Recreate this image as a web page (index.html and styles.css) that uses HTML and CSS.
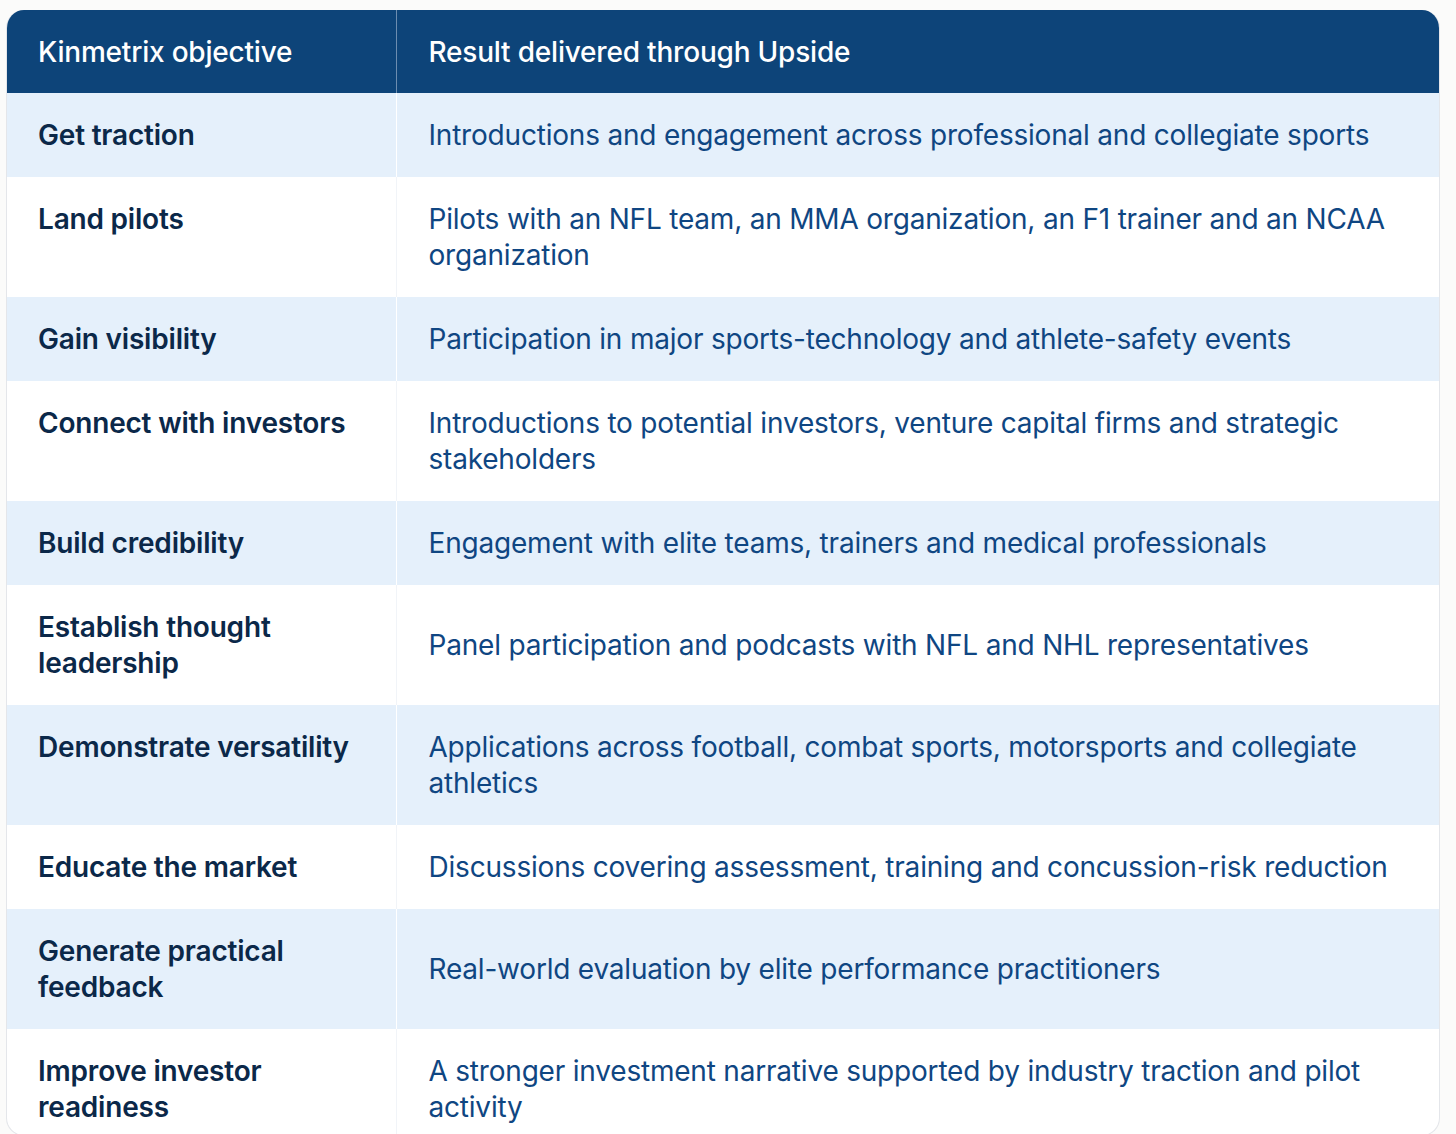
FILE: index.html
```html
<!DOCTYPE html>
<html lang="en">
<head>
<meta charset="utf-8">
<title>Kinmetrix objectives</title>
<link rel="stylesheet" href="styles.css">
</head>
<body>
<div class="card">
  <table class="results">
    <thead>
      <tr>
        <th class="col-obj">Kinmetrix objective</th>
        <th class="col-res">Result delivered through Upside</th>
      </tr>
    </thead>
    <tbody>
      <tr><td class="obj">Get traction</td><td class="res">Introductions and engagement across professional and collegiate sports</td></tr>
      <tr><td class="obj">Land pilots</td><td class="res">Pilots with an NFL team, an MMA organization, an F1 trainer and an NCAA organization</td></tr>
      <tr><td class="obj">Gain visibility</td><td class="res">Participation in major sports-technology and athlete-safety events</td></tr>
      <tr><td class="obj">Connect with investors</td><td class="res">Introductions to potential investors, venture capital firms and strategic stakeholders</td></tr>
      <tr><td class="obj">Build credibility</td><td class="res">Engagement with elite teams, trainers and medical professionals</td></tr>
      <tr><td class="obj">Establish thought leadership</td><td class="res">Panel participation and podcasts with NFL and NHL representatives</td></tr>
      <tr><td class="obj">Demonstrate versatility</td><td class="res">Applications across football, combat sports, motorsports and collegiate athletics</td></tr>
      <tr><td class="obj">Educate the market</td><td class="res">Discussions covering assessment, training and concussion-risk reduction</td></tr>
      <tr><td class="obj">Generate practical feedback</td><td class="res">Real-world evaluation by elite performance practitioners</td></tr>
      <tr class="last"><td class="obj">Improve investor readiness</td><td class="res">A stronger investment narrative supported by industry traction and pilot activity</td></tr>
    </tbody>
  </table>
</div>
</body>
</html>
```

FILE: styles.css
```css
html, body {
  margin: 0;
  padding: 0;
  background: #fbfbfa;
}
body {
  padding: 10px 16px 0 6px;
  font-family: Inter, "Noto Sans", sans-serif;
  height: 1134px;
  box-sizing: border-box;
  overflow: hidden;
}
.card {
  width: 1434px;
  border: 1px solid #e4e6ea;
  border-top: none;
  border-radius: 18px;
  overflow: hidden;
  background: #ffffff;
  box-sizing: border-box;
}
.results {
  width: 100%;
  border-collapse: collapse;
  table-layout: fixed;
}
.col-obj { width: 389px; }
th {
  background: #0d4479;
  color: #ffffff;
  font-weight: 500;
  font-size: 28px;
  letter-spacing: -0.2px;
  text-align: left;
  height: 83px;
  padding: 0 20px 0 31px;
  box-sizing: border-box;
  vertical-align: middle;
}
th.col-res {
  border-left: 1px solid #6c8db0;
  padding-left: 32px;
}
td {
  font-size: 28px;
  line-height: 36px;
  letter-spacing: -0.2px;
  padding: 24px 20px 24px 31px;
}
td.obj {
  color: #0b2849;
  font-weight: 600;
  vertical-align: top;
}
td.res {
  color: #0f4682;
  font-weight: 400;
  vertical-align: middle;
  border-left: 1px solid #f1f4f8;
  padding-left: 32px;
  padding-right: 40px;
}
tbody tr:nth-child(odd) { background: #e5f0fb; }
tbody tr:nth-child(odd) td.res { border-left-color: #ffffff; }
tbody tr.last td { padding-bottom: 10px; }
```
